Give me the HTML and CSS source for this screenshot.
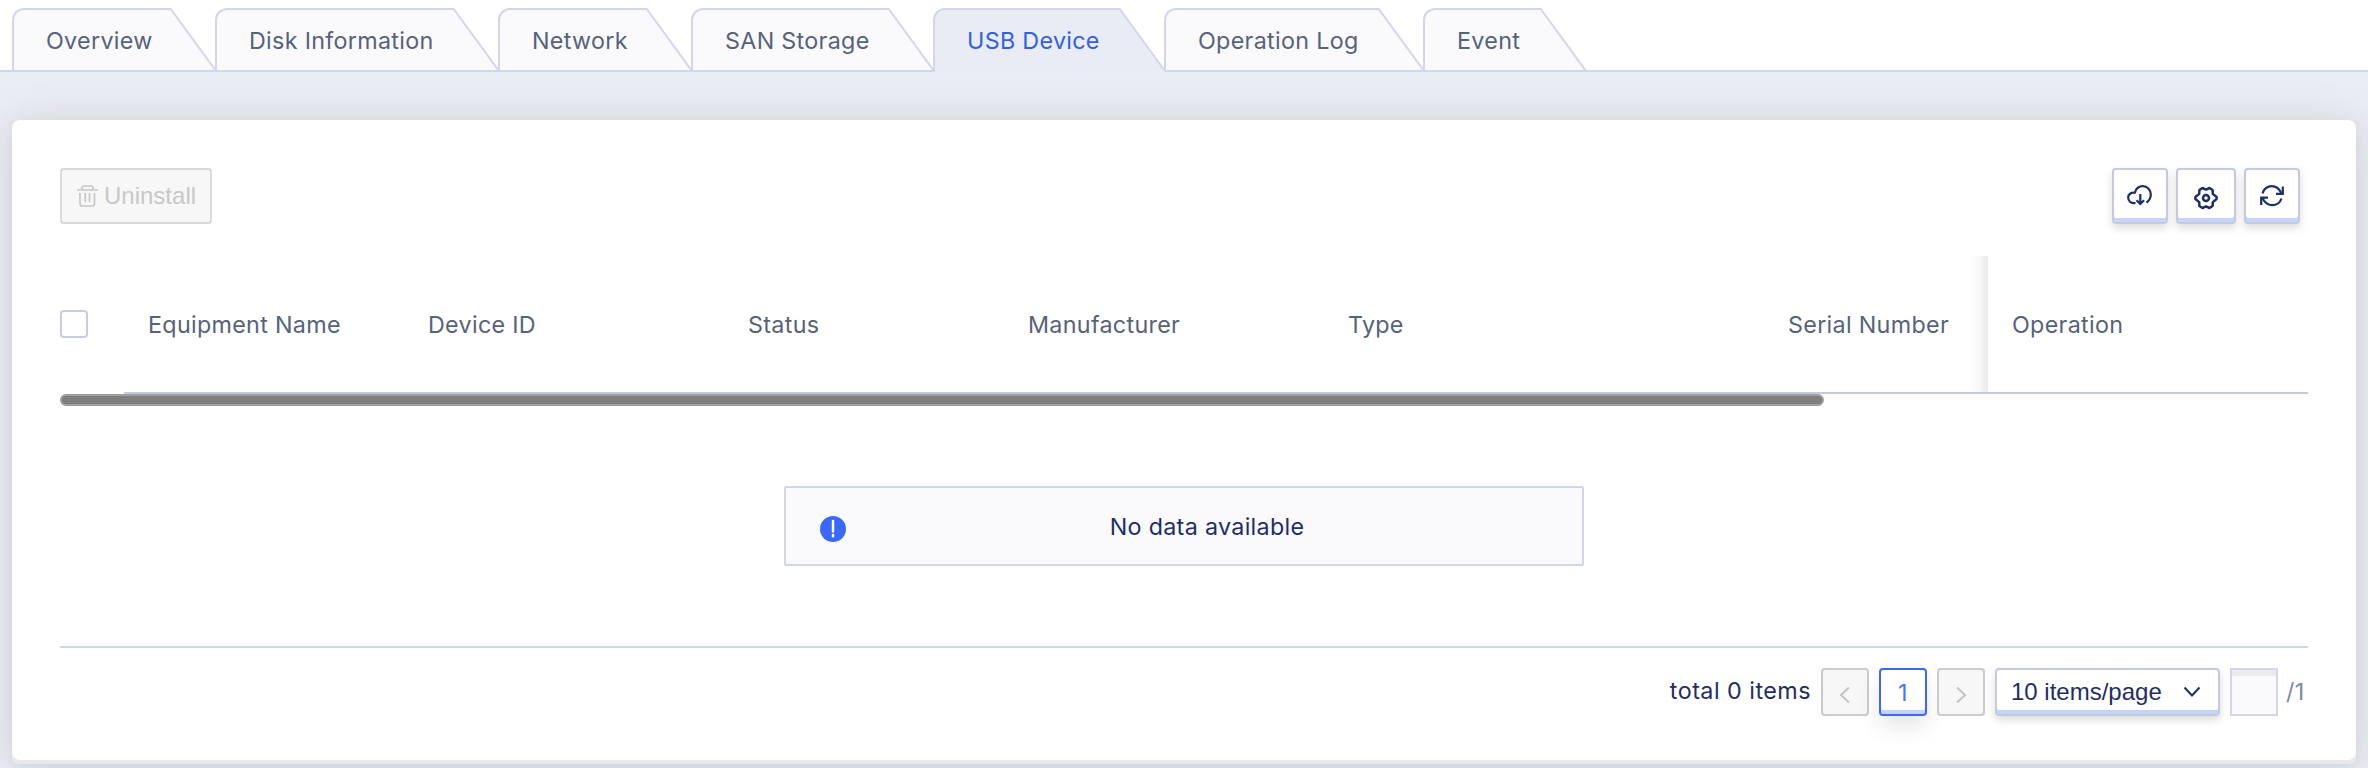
FILE: index.html
```html
<!DOCTYPE html>
<html lang="en">
<head>
<meta charset="utf-8">
<title>USB Device</title>
<link rel="stylesheet" href="styles.css">
</head>
<body>
<nav class="tabs">
  <a class="tab tab-overview"><span class="tab-label">Overview</span><svg class="tab-slope" viewBox="0 0 46 64"><path class="fill" d="M-1 2H1L46 64H-1Z"/><path class="edge" d="M0 0L46 63"/></svg></a>
  <a class="tab tab-disk"><span class="tab-label">Disk Information</span><svg class="tab-slope" viewBox="0 0 46 64"><path class="fill" d="M-1 2H1L46 64H-1Z"/><path class="edge" d="M0 0L46 63"/></svg></a>
  <a class="tab tab-network"><span class="tab-label">Network</span><svg class="tab-slope" viewBox="0 0 46 64"><path class="fill" d="M-1 2H1L46 64H-1Z"/><path class="edge" d="M0 0L46 63"/></svg></a>
  <a class="tab tab-san"><span class="tab-label">SAN Storage</span><svg class="tab-slope" viewBox="0 0 46 64"><path class="fill" d="M-1 2H1L46 64H-1Z"/><path class="edge" d="M0 0L46 63"/></svg></a>
  <a class="tab tab-usb active"><span class="tab-label">USB Device</span><svg class="tab-slope" viewBox="0 0 46 64"><path class="fill" d="M-1 2H1L46 64H-1Z"/><path class="edge" d="M0 0L46 63"/></svg></a>
  <a class="tab tab-log"><span class="tab-label">Operation Log</span><svg class="tab-slope" viewBox="0 0 46 64"><path class="fill" d="M-1 2H1L46 64H-1Z"/><path class="edge" d="M0 0L46 63"/></svg></a>
  <a class="tab tab-event"><span class="tab-label">Event</span><svg class="tab-slope" viewBox="0 0 46 64"><path class="fill" d="M-1 2H1L46 64H-1Z"/><path class="edge" d="M0 0L46 63"/></svg></a>
</nav>
<main class="content">
  <section class="card">
    <div class="toolbar">
      <button class="btn-disabled" disabled>
        <svg width="21" height="22" viewBox="0 0 21 22"><path d="M0 5H21M5 5V3.200Q5 1 7.200 1H14Q16 1 16 3.200V5M3 8V18.500Q3 21 5.500 21H15Q17.500 21 17.500 18.500V8M8.200 8V17M12.500 8V17"/></svg>
        <span>Uninstall</span>
      </button>
      <div class="tools">
        <button class="tool">
          <svg width="26" height="22" viewBox="0 0 26 22"><path d="M8.500 18.200H7.500C3.600 18.200 1.200 15.800 1.200 12.600C1.200 9.200 4 7.400 7.800 7.700C9 3.800 12 1.200 15.800 1.200C20.600 1.200 23.800 5 23.800 9.600C23.800 13 22.300 15.600 19.500 17.600M13.300 9V18.600M9.500 15.200L13.300 19L17.100 15.200"/></svg>
        </button>
        <button class="tool tool-wide">
          <svg width="24" height="24" viewBox="0 0 24 24"><path d="M8.500 2L12 3.600L15.500 2L18.600 4L18.800 7.900L22.600 11V13L18.800 16.100L18.600 20L15.500 22L12 20.400L8.500 22L5.400 20L5.200 16.100L1.400 13V11L5.200 7.900L5.400 4Z"/><circle cx="12" cy="12" r="3"/></svg>
        </button>
        <button class="tool">
          <svg width="26" height="22" viewBox="0 0 26 22"><path d="M3.500 8.500C5 4 8.500 1.200 12.800 1.200C17 1.200 20 3.500 22.300 8M23.800 1.500V8.800H17M22.500 13.500C21 18 17.500 20.200 13.200 20.200C9 20.200 6 18 3.700 13.500M2.200 20V12.700H9"/></svg>
        </button>
      </div>
    </div>
    <div class="table-head">
      <div class="cell cell-check"><span class="checkbox"></span></div>
      <div class="cell cell-name">Equipment Name</div>
      <div class="cell cell-id">Device ID</div>
      <div class="cell cell-status">Status</div>
      <div class="cell cell-maker">Manufacturer</div>
      <div class="cell cell-type">Type</div>
      <div class="cell cell-serial">Serial Number</div>
      <div class="cell cell-operation">Operation</div>
    </div>
    <div class="scrollbar"></div>
    <div class="empty">
      <svg width="26" height="26" viewBox="0 0 26 26"><circle cx="13" cy="13" r="13"/><path d="M13 5V15.500M13 19V20.300"/></svg>
      <span>No data available</span>
    </div>
    <div class="pager">
      <span class="total">total 0 items</span>
      <button class="page page-off" disabled><svg width="12" height="18" viewBox="0 0 12 18"><path d="M10 1.500L2 9L10 16.500"/></svg></button>
      <button class="page page-current">1</button>
      <button class="page page-off" disabled><svg width="12" height="18" viewBox="0 0 12 18"><path d="M2 1.500L10 9L2 16.500"/></svg></button>
      <div class="select"><span>10 items/page</span><svg width="18" height="12" viewBox="0 0 18 12"><path d="M1.500 1.500L9 9.500L16.500 1.500"/></svg></div>
      <input class="jump" type="text" aria-label="Page">
      <span class="pages">/1</span>
    </div>
  </section>
</main>
</body>
</html>
```

FILE: styles.css
```css
* { box-sizing: border-box; }
body {
  margin: 0;
  height: 768px;
  overflow: hidden;
  background: #ebedf6;
  font-family: Inter, "Liberation Sans", sans-serif;
  font-size: 23.300px;
  letter-spacing: .31px;
  color: #566379;
}
button { font-family: inherit; font-size: inherit; letter-spacing: inherit; padding: 0; }
svg { display: block; fill: none; stroke: currentColor; stroke-width: 2; flex: none; }

.tabs {
  display: flex;
  height: 72px;
  padding: 8px 0 0 12px;
  background: #fff;
  border-bottom: 2px solid #d3d6ea;
}
.tab { display: flex; height: 62px; }
.tab-label {
  flex: 1;
  padding-left: 32px;
  line-height: 62px;
  white-space: nowrap;
  background: #fafafd;
  border: 2px solid #d3d6ea;
  border-right: 0;
  border-bottom: 0;
  border-top-left-radius: 12px;
}
.tab-slope { width: 46px; height: 64px; margin: 0 -1px -2px 0; overflow: visible; }
.tab-slope .fill { fill: #fafafd; stroke: none; }
.tab-slope .edge { stroke: #d3d6ea; }
.tab:not(.active) .tab-slope { clip-path: inset(-1px -1px 2px -1px); }
.tab.active { height: 64px; color: #3560dc; }
.tab.active .tab-label { background: #e9ecf5; }
.tab.active .fill { fill: #e9ecf5; }
.tab-overview { width: 203px; }
.tab-disk { width: 283px; }
.tab-network { width: 193px; }
.tab-san { width: 242px; }
.tab-usb { width: 231px; }
.tab-log { width: 259px; }
.tab-event { width: 162px; }

.content { padding: 48px 12px 0; }
.card {
  height: 644px;
  padding: 48px;
  background: #fff;
  border-radius: 8px;
  box-shadow: inset 0 -4px 0 #e9e9e9, 0 2px 8px rgba(90, 90, 100, .05), 0 4px 40px rgba(100, 100, 100, .22);
}
.toolbar { display: flex; justify-content: space-between; height: 88px; padding-right: 8px; }
.btn-disabled {
  display: flex;
  align-items: center;
  gap: 6px;
  width: 152px;
  height: 56px;
  padding-left: 15px;
  border: 2px solid #d9d9d9;
  border-radius: 4px;
  background: #f7f7f7;
  color: #c8c8c8;
  font-family: "Liberation Sans", Arial, sans-serif;
  font-size: 24px;
  letter-spacing: 0;
}
.btn-disabled svg { stroke-width: 1.700; }
.tools { display: flex; gap: 8px; }
.tool {
  display: flex;
  justify-content: center;
  width: 56px;
  height: 56px;
  padding-top: 15px;
  border: 2px solid #c4c9dd;
  border-radius: 4px;
  background: #fff;
  box-shadow: inset 0 -4px 0 #c4d3f8, 0 4px 8px rgba(0, 0, 0, .14);
  color: #1f2e63;
}
.tool svg { stroke-width: 2.200; }
.tool-wide { width: 60px; padding-top: 16px; }
.tool-wide svg { stroke-width: 2.500; stroke-linejoin: round; }

.table-head { display: flex; height: 138px; }
.cell {
  padding-left: 24px;
  border-bottom: 2px solid #c4c9dd;
  line-height: 138px;
  white-space: nowrap;
  flex: none;
}
.cell-check { display: flex; align-items: center; width: 64px; padding: 0; border-bottom-color: transparent; }
.checkbox { width: 28px; height: 28px; border: 2px solid #c9cbe0; border-radius: 4px; }
.cell-name, .cell-status { width: 280px; }
.cell-id, .cell-maker { width: 320px; }
.cell-type { width: 440px; }
.cell-serial {
  width: 224px;
  background: linear-gradient(to left, #e9e9e9, #f9f9f9 9px, #fff 20px) no-repeat;
}
.cell-operation { width: 320px; }
.scrollbar { width: 1764px; height: 12px; border: 2px solid #9f9f9f; border-radius: 6px; background: #7f7f7f; }
.empty {
  display: flex;
  align-items: center;
  width: 800px;
  height: 80px;
  margin: 80px auto;
  padding: 0 34px;
  border: 2px solid #d3d6ea;
  border-radius: 2px;
  background: #fafafd;
  color: #1f2e63;
}
.empty svg { margin-top: 6px; fill: #3b69f6; stroke: #fff; stroke-width: 2.500; stroke-linecap: round; }
.empty circle { stroke: none; }
.empty span { flex: 1; margin-left: 20px; text-align: center; }
.pager {
  display: flex;
  justify-content: flex-end;
  height: 70px;
  padding-top: 20px;
  border-top: 2px solid #d3d6ea;
  color: #1f2e63;
}
.total { line-height: 46px; margin-right: 10px; letter-spacing: .48px; }
.page {
  display: flex;
  align-items: center;
  justify-content: center;
  width: 48px;
  height: 48px;
  margin-right: 10px;
  border: 2px solid #cbcbcb;
  border-radius: 4px;
  background: #f7f7f7;
  color: #c4c4c4;
}
.page svg { margin-top: 6px; }
.page-current {
  border-color: #3b69f6;
  background: #fff;
  color: #4a72f5;
  box-shadow: inset 0 -4px 0 #c4d3f8, 0 12px 24px -2px rgba(0, 0, 0, .11);
}
.select {
  display: flex;
  align-items: center;
  justify-content: space-between;
  width: 225px;
  height: 48px;
  padding: 0 17px 0 14px;
  border: 2px solid #c4c9dd;
  border-radius: 4px;
  box-shadow: inset 0 -4px 0 #c4d3f8, 0 4px 8px rgba(0, 0, 0, .14);
  font-family: "Liberation Sans", Arial, sans-serif;
  font-size: 24px;
  letter-spacing: 0;
}
.jump {
  width: 48px;
  height: 48px;
  margin: 0 8px 0 10px;
  border: 2px solid #d3d6ea;
  background: #fafafd;
  box-shadow: inset 0 6px 0 #ebebed;
}
.pages { width: 22px; line-height: 48px; color: #7d8aad; white-space: nowrap; }
```
